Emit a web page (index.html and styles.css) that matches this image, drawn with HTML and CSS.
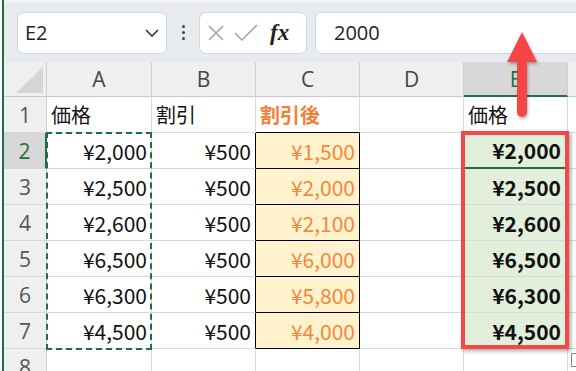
FILE: index.html
```html
<!DOCTYPE html>
<html>
<head>
  <title>Sheet</title>
  <meta name="viewport" content="width=device-width, initial-scale=1">
  <link rel="stylesheet" href="styles.css">
</head>
<body>
  <div class="app">
    <div class="topbar">
      <div class="name-box">
        <span>E2</span>
        <svg class="chevron" width="14" height="8" viewBox="0 0 14 8"><polyline points="1,1 7,7 13,1" fill="none" stroke="#333" stroke-width="1.6"/></svg>
      </div>
      <div class="grip"><i></i><i></i><i></i></div>
      <div class="fx-box">
        <svg width="16" height="16" viewBox="0 0 16 16"><path d="M1 1 L15 15 M15 1 L1 15" stroke="#a3a3a3" stroke-width="1.5" fill="none"/></svg>
        <svg width="24" height="18" viewBox="0 0 24 18"><polyline points="1,9 8,16 23,1" stroke="#a3a3a3" stroke-width="1.5" fill="none"/></svg>
        <span class="fx">fx</span>
      </div>
      <div class="formula-input">2000</div>
    </div>

    <div class="sheet">
      <div class="corner"><span class="tri"></span></div>
      <div class="colhead">A</div>
      <div class="colhead">B</div>
      <div class="colhead">C</div>
      <div class="colhead">D</div>
      <div class="colhead active">E</div>
      <div class="colhead"></div>

      <div class="rowhead">1</div>
      <div class="cell">価格</div>
      <div class="cell">割引</div>
      <div class="cell after c-top">割引後</div>
      <div class="cell"></div>
      <div class="cell e-top">価格</div>
      <div class="cell"></div>

      <div class="rowhead active">2</div>
      <div class="cell num">¥2,000</div>
      <div class="cell num b-edge">¥500</div>
      <div class="cell num disc">¥1,500</div>
      <div class="cell"></div>
      <div class="cell num total current">¥2,000</div>
      <div class="cell"></div>

      <div class="rowhead">3</div>
      <div class="cell num">¥2,500</div>
      <div class="cell num b-edge">¥500</div>
      <div class="cell num disc">¥2,000</div>
      <div class="cell"></div>
      <div class="cell num total">¥2,500</div>
      <div class="cell"></div>

      <div class="rowhead">4</div>
      <div class="cell num">¥2,600</div>
      <div class="cell num b-edge">¥500</div>
      <div class="cell num disc">¥2,100</div>
      <div class="cell"></div>
      <div class="cell num total">¥2,600</div>
      <div class="cell"></div>

      <div class="rowhead">5</div>
      <div class="cell num">¥6,500</div>
      <div class="cell num b-edge">¥500</div>
      <div class="cell num disc">¥6,000</div>
      <div class="cell"></div>
      <div class="cell num total">¥6,500</div>
      <div class="cell"></div>

      <div class="rowhead">6</div>
      <div class="cell num">¥6,300</div>
      <div class="cell num b-edge">¥500</div>
      <div class="cell num disc">¥5,800</div>
      <div class="cell"></div>
      <div class="cell num total">¥6,300</div>
      <div class="cell"></div>

      <div class="rowhead">7</div>
      <div class="cell num">¥4,500</div>
      <div class="cell num b-edge">¥500</div>
      <div class="cell num disc">¥4,000</div>
      <div class="cell"></div>
      <div class="cell num total">¥4,500</div>
      <div class="cell"></div>

      <div class="rowhead">8</div>
      <div class="cell"></div>
      <div class="cell"></div>
      <div class="cell"></div>
      <div class="cell"></div>
      <div class="cell"></div>
      <div class="cell"></div>

      <!-- copy range (marching ants) -->
      <div class="copy-range"></div>
      <!-- highlight around E2:E7 -->
      <div class="red-box"></div>
      <div class="quick-icon"></div>
    </div>

    <svg class="arrow" width="40" height="96" viewBox="0 0 40 96">
      <defs>
        <filter id="sh" x="-50%" y="-20%" width="200%" height="140%">
          <feDropShadow dx="1" dy="2" stdDeviation="1.5" flood-color="#000" flood-opacity="0.3"/>
        </filter>
      </defs>
      <g filter="url(#sh)" fill="#f54444">
        <polygon points="17,3 2,33 32,33"/>
        <rect x="12" y="30" width="10" height="58" rx="5"/>
      </g>
    </svg>
  </div>
</body>
</html>
```

FILE: styles.css
```css
body {
  margin: 0;
  background: #fff;
  font-family: "Noto Sans CJK JP", "Noto Sans", sans-serif;
}
.app {
  position: relative;
  width: 574px;
  height: 371px;
  margin-left: 2px;
  border-left: 2px solid #1e6f42;
  overflow: hidden;
}
.topbar {
  height: 62px;
  box-sizing: border-box;
  display: flex;
  align-items: center;
  padding-left: 13px;
  background: #e7eaee;
  border-top: 3px solid #f2f3f5;
}
.name-box {
  width: 150px;
  height: 42px;
  box-sizing: border-box;
  background: #fff;
  border: 1px solid #d3d6db;
  border-radius: 7px;
  display: flex;
  align-items: center;
  justify-content: space-between;
  padding: 0 7px 0 7px;
  font-family: "Open Sans", "Noto Sans", sans-serif;
  font-size: 20px;
  color: #222;
}
.chevron {
  margin-right: 0;
}
.grip {
  width: 32px;
  display: flex;
  flex-direction: column;
  align-items: center;
  gap: 3px;
}
.grip i {
  width: 3px;
  height: 3px;
  border-radius: 2px;
  background: #444;
}
.fx-box {
  width: 108px;
  height: 42px;
  box-sizing: border-box;
  background: #fff;
  border: 1px solid #d3d6db;
  border-radius: 7px;
  display: flex;
  align-items: center;
  gap: 10px;
  padding-left: 8px;
}
.fx {
  font-family: "Liberation Serif", serif;
  font-style: italic;
  font-weight: bold;
  font-size: 23px;
  color: #222;
  margin-left: 2px;
}
.formula-input {
  flex: 1;
  margin-left: 8px;
  margin-right: -20px;
  height: 42px;
  box-sizing: border-box;
  background: #fff;
  border: 1px solid #d3d6db;
  border-radius: 7px;
  padding-left: 18px;
  display: flex;
  align-items: center;
  font-family: "Open Sans", "Noto Sans", sans-serif;
  font-size: 20px;
  color: #222;
}

.sheet {
  position: relative;
  display: grid;
  grid-template-columns: 43px 105px 104px 104px 104px 104px 1fr;
  grid-template-rows: 35px repeat(7, 36px) 36px;
}
.sheet > div {
  box-sizing: border-box;
}
.corner {
  position: relative;
  background: #efefef;
  border-right: 1px solid #d0d0d0;
  border-bottom: 1px solid #c8c8c8;
}
.tri {
  position: absolute;
  right: 3px;
  bottom: 3px;
  width: 0;
  height: 0;
  border-left: 27px solid transparent;
  border-bottom: 26px solid #d5d5d5;
}
.colhead {
  background: #efefef;
  border-right: 1px solid #d0d0d0;
  border-bottom: 1px solid #c8c8c8;
  display: flex;
  align-items: center;
  justify-content: center;
  font-family: "Open Sans", "Noto Sans", sans-serif;
  font-size: 21px;
  color: #444;
}
.colhead.active {
  background: #d8d8d8;
  color: #1e6f42;
  border-bottom: 2px solid #1e6f42;
}
.rowhead {
  background: #efefef;
  border-right: 1px solid #d0d0d0;
  border-bottom: 1px solid #d8d8d8;
  display: flex;
  align-items: center;
  justify-content: center;
  font-family: "Open Sans", "Noto Sans", sans-serif;
  font-size: 21px;
  color: #555;
}
.rowhead.active {
  background: #d8d8d8;
  color: #1e6f42;
  border-right: 2px solid #1e6f42;
}
.cell {
  border-right: 1px solid #d9d9d9;
  border-bottom: 1px solid #d9d9d9;
  display: flex;
  align-items: center;
  padding: 0 4px;
  font-size: 20px;
  color: #111;
  white-space: nowrap;
}
.cell.num {
  justify-content: flex-end;
  font-size: 21px;
}
.after {
  color: #f0803a;
  font-weight: bold;
}
.c-top {
  border-bottom-color: #000;
}
.b-edge {
  border-right-color: #000;
}
.disc {
  background: #fff2cc;
  color: #f4883c;
  border-right-color: #000;
  border-bottom-color: #000;
}
.total {
  background: #e2efda;
  font-weight: bold;
  padding-right: 6px;
}
.current {
  border-bottom: 2px solid #1e6f42;
}
.copy-range {
  position: absolute;
  left: 42px;
  top: 70px;
  width: 106px;
  height: 218px;
  border: 2px dashed #1e6f42;
}
.red-box {
  position: absolute;
  left: 457px;
  top: 69px;
  width: 108px;
  height: 218px;
  border: 4px solid #f44848;
  box-sizing: border-box;
  box-shadow: 2px 2px 4px rgba(0, 0, 0, 0.35);
}
.quick-icon {
  position: absolute;
  left: 567px;
  top: 291px;
  width: 12px;
  height: 14px;
  background: #fff;
  border: 1px solid #888;
}
.arrow {
  position: absolute;
  left: 501px;
  top: 29px;
}
```
